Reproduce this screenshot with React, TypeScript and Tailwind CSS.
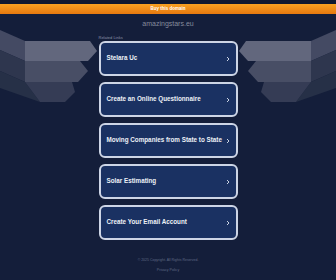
import React from "react";

const links = [
  "Stelara Uc",
  "Create an Online Questionnaire",
  "Moving Companies from State to State",
  "Solar Estimating",
  "Create Your Email Account",
];

function Shapes() {
  const group = (
    <>
      <polygon points="0,30 25,41 25,61 0,50" fill="#444a63" />
      <polygon points="0,50 25,61 25,82 0,71" fill="#2e364e" />
      <polygon points="0,71 25,82 40,102 0,88" fill="#263047" />
      <polygon points="25,41 90,41 97,51 88,61 25,61" fill="#62677d" />
      <polygon points="25,61 80,61 88,71 78,82 25,82" fill="#484e65" />
      <polygon points="25,82 72,82 75,92 65,102 40,102" fill="#353c55" />
    </>
  );
  return (
    <svg
      className="absolute inset-0 pointer-events-none"
      width="336"
      height="280"
      viewBox="0 0 336 280"
    >
      {group}
      <g transform="translate(336,0) scale(-1,1)">{group}</g>
    </svg>
  );
}

export default function App() {
  return (
    <div
      className="relative w-[336px] h-[280px] overflow-hidden bg-[#141e3a]"
      style={{ fontFamily: '"Liberation Sans", Arial, sans-serif' }}
    >
      <Shapes />
      <div className="relative flex flex-col items-center">
        <div className="w-full h-[4px] bg-[#0f1830]" />
        <div className="w-full h-[10px] bg-linear-to-b from-[#f7a021] to-[#e6790f] flex items-center justify-center">
          <span className="text-[4.5px] leading-none text-white font-semibold">Buy this domain</span>
        </div>
        <div className="h-[18px] flex items-center justify-center">
          <span className="text-[7px] leading-none text-[#858b9c]">amazingstars.eu</span>
        </div>
        <div className="mt-[3px] w-[139px] h-[5px] flex items-center">
          <span className="text-[4px] leading-none text-[#8a92a8]">Related Links</span>
        </div>
        <div className="mt-[1px] flex flex-col gap-[6px]">
          {links.map((l) => (
            <div
              key={l}
              className="w-[139px] h-[35px] rounded-[6px] border-2 border-[#cdd5e6] bg-[#1a3162] flex items-center justify-between pl-[6px] pr-[6px]"
            >
              <span className="text-[6.3px] leading-none font-bold text-[#eef1f7]">{l}</span>
              <svg width="4" height="6" viewBox="0 0 4 6">
                <path d="M1 1 L3 3 L1 5" stroke="#dfe5f0" strokeWidth="0.9" fill="none" />
              </svg>
            </div>
          ))}
        </div>
        <div className="mt-[18px] h-[6px] flex items-center">
          <span className="text-[3.5px] leading-none text-[#5f6985]">© 2025 Copyright. All Rights Reserved.</span>
        </div>
        <div className="mt-[4px] h-[6px] flex items-center">
          <span className="text-[3.6px] leading-none text-[#5f6985]">Privacy Policy</span>
        </div>
      </div>
    </div>
  );
}
